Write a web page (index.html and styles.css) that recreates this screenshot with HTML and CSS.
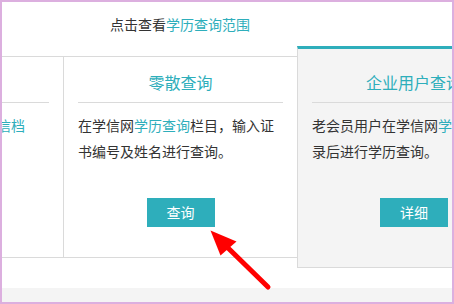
FILE: index.html
```html
<!DOCTYPE html>
<html lang="zh-CN">
<head>
<meta charset="utf-8">
<title>学历查询</title>
<link rel="stylesheet" href="styles.css">
</head>
<body>
<div class="frame">
  <div class="wrap">
    <div class="head">点击查看<a class="link" href="#">学历查询范围</a></div>
    <div class="cards">
      <div class="card">
        <div class="card-title">本人查询</div>
        <div class="card-text">本人查询请注册并登录<span class="link">学信档</span><br><span class="link">案</span>，查看本人学历信息。</div>
        <div class="btn">登录</div>
      </div>
      <div class="card card-mid">
        <div class="card-title">零散查询</div>
        <div class="card-text">在学信网<span class="link">学历查询</span>栏目，输入证书编号及姓名进行查询。</div>
        <div class="btn">查询</div>
      </div>
      <div class="card card-active">
        <div class="card-title">企业用户查询</div>
        <div class="card-text">老会员用户在学信网<span class="link">学历查询</span>登录后进行学历查询。</div>
        <div class="btn">详细</div>
      </div>
    </div>
    <div class="foot"></div>
  </div>
  <svg class="arrow" width="80" height="80" viewBox="0 0 80 80">
    <polygon points="10.5,10.5 20.5,35.5 36.5,21.5" fill="#ff0000"/>
    <line x1="25" y1="25" x2="68" y2="67" stroke="#ff0000" stroke-width="5" stroke-linecap="round"/>
  </svg>
</div>
</body>
</html>
```
FILE: styles.css
```css
html, body {
  margin: 0;
  padding: 0;
}
body {
  font-family: "Noto Sans CJK SC", "Microsoft YaHei", sans-serif;
  color: #333;
  background: #fff;
}
.frame {
  position: relative;
  width: 454px;
  height: 304px;
  box-sizing: border-box;
  border: 2px solid #dcafdf;
  overflow: hidden;
  background: #fff;
}
.wrap {
  width: 702px;
  margin-left: -173px;
}
.head {
  padding: 10px 0 20px;
  line-height: 24px;
  font-size: 14px;
  text-align: center;
}
.link {
  color: #2eaebb;
  text-decoration: none;
}
.cards {
  display: flex;
  height: 200px;
  border-top: 1px solid #dadada;
  border-bottom: 1px solid #dadada;
}
.card {
  flex: 0 0 234px;
  box-sizing: border-box;
  padding: 0 14px;
  width: 234px;
}
.card-mid {
  border-left: 1px solid #dadada;
}
.card-active {
  margin: -11px 0;
  background: #f4f4f4;
  border: 1px solid #dadada;
  border-top: 3px solid #2eaebb;
}
.card-title {
  margin-top: 13px;
  padding-bottom: 8px;
  line-height: 24px;
  font-size: 16px;
  color: #2eaebb;
  text-align: center;
  border-bottom: 1px solid #dadada;
  white-space: nowrap;
}
.card-active .card-title {
  margin-top: 21px;
}
.card-text {
  margin-top: 9px;
  line-height: 26px;
  font-size: 14px;
  height: 52px;
  overflow: hidden;
}
.btn {
  width: 68px;
  height: 29px;
  margin: 34px auto 0;
  background: #2eaebb;
  color: #fff;
  font-size: 14px;
  line-height: 29px;
  text-align: center;
}
.foot {
  margin-top: 30px;
  height: 20px;
  background: #f4f4f4;
}
.arrow {
  position: absolute;
  left: 198px;
  top: 218px;
}
```
